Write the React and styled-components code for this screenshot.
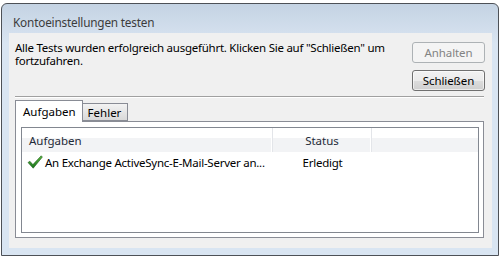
import React from 'react';
import styled, { createGlobalStyle } from 'styled-components';

const GlobalStyle = createGlobalStyle`
  html, body {
    margin: 0;
    background: #ffffff;
  }
  body {
    font-family: "Noto Sans", "Open Sans", sans-serif;
    font-size: 11.5px;
  }
`;

const Window = styled.div`
  box-sizing: border-box;
  margin: 3px 0 0 1px;
  width: 498px;
  height: 253px;
  border: 1px solid #4d5157;
  border-radius: 6px 6px 0 0;
  background: linear-gradient(#c4d3e3 0, #d3dfed 28px, #d9e5f2 40px, #d9e5f2);
  padding: 0 6px 7px 7px;
  display: flex;
  flex-direction: column;
`;

const TitleBar = styled.div`
  height: 29px;
  box-sizing: border-box;
  padding: 10px 0 0 4px;
  line-height: 16px;
  color: #3c3c3c;
  font-size: 11.8px;
  letter-spacing: -0.2px;
`;

const Content = styled.div`
  flex: 1;
  background: #f0f0f0;
  padding: 8px 7px 10px 6px;
  display: flex;
  flex-direction: column;
  min-height: 0;
`;

const TopRow = styled.div`
  display: flex;
  align-items: flex-start;
`;

const Message = styled.div`
  flex: 1;
  line-height: 13px;
  color: #000;
  white-space: nowrap;
  letter-spacing: -0.25px;
`;

const ButtonCol = styled.div`
  display: flex;
  flex-direction: column;
  gap: 7px;
  margin-top: 1px;
`;

const Button = styled.button`
  box-sizing: border-box;
  width: 73px;
  height: 21px;
  padding: 0;
  font: inherit;
  letter-spacing: -0.1px;
  border-radius: 3px;
  border: 1px solid ${p => (p.disabled ? '#adb2b5' : '#707070')};
  color: ${p => (p.disabled ? '#838383' : '#000')};
  background: ${p =>
    p.disabled
      ? '#f4f4f4'
      : 'linear-gradient(#f2f2f2 0, #ebebeb 50%, #dddddd 50%, #cfcfcf 100%)'};
  box-shadow: ${p => (p.disabled ? 'none' : 'inset 0 0 0 1px rgba(255,255,255,0.6)')};
`;

const Separator = styled.div`
  margin: 5px 1px 0 0;
  border-top: 1px solid #a0a0a0;
  border-bottom: 1px solid #ffffff;
`;

const TabStrip = styled.div`
  margin-top: 2px;
  height: 21px;
  display: flex;
  align-items: flex-end;
  position: relative;
  z-index: 1;
`;

const Tab = styled.div`
  box-sizing: border-box;
  height: ${p => (p.active ? '22px' : '18px')};
  margin-bottom: ${p => (p.active ? '-1px' : '0')};
  padding: ${p => (p.active ? '3px 6px 0 7px' : '1px 6px 0 5px')};
  border: 1px solid #898c95;
  border-bottom: ${p => (p.active ? 'none' : '1px solid #898c95')};
  border-left: ${p => (p.active ? '1px solid #898c95' : 'none')};
  background: ${p => (p.active ? '#ffffff' : 'linear-gradient(#f3f3f3, #e3e3e3 60%, #d9d9d9)')};
  line-height: 15px;
  color: #000;
`;

const Panel = styled.div`
  flex: 1;
  margin-right: 1px;
  border: 1px solid #898c95;
  background: #ffffff;
  padding: 5px 4px 4px 5px;
  display: flex;
  min-height: 0;
`;

const ListView = styled.div`
  flex: 1;
  border: 1px solid #828790;
  background: #ffffff;
  display: flex;
  flex-direction: column;
`;

const HeaderRow = styled.div`
  display: flex;
  height: 24px;
  background: linear-gradient(#ffffff 0, #ffffff 42%, #f2f3f5 42%, #f2f3f5 100%);
`;

const HeaderCell = styled.div`
  box-sizing: border-box;
  width: ${p => p.w || 'auto'};
  flex: ${p => (p.w ? 'none' : '1')};
  padding: 5px 0 0 ${p => (p.center ? '0' : '7px')};
  text-align: ${p => (p.center ? 'center' : 'left')};
  border-right: ${p => (p.last ? 'none' : '1px solid #e3e5e9')};
  box-shadow: ${p => (p.last ? 'none' : 'inset -1px 0 0 #ffffff')};
  line-height: 15px;
  color: #1e2a38;
`;

const Row = styled.div`
  display: flex;
  height: 20px;
  align-items: center;
`;

const Cell = styled.div`
  box-sizing: border-box;
  width: ${p => p.w};
  flex: none;
  display: flex;
  align-items: center;
  justify-content: ${p => (p.center ? 'center' : 'flex-start')};
  padding-left: ${p => (p.center ? '0' : '5px')};
  gap: 2px;
  color: #000;
  white-space: nowrap;
  letter-spacing: -0.25px;

  svg {
    flex-shrink: 0;
  }
`;

function Check() {
  return (
    <svg width="16" height="16" viewBox="0 0 16 16">
      <defs>
        <linearGradient id="chk" x1="0" y1="0" x2="0" y2="1">
          <stop offset="0" stopColor="#5fb83f" />
          <stop offset="1" stopColor="#16731a" />
        </linearGradient>
      </defs>
      <path
        d="M1 8.6 L2.8 7.2 L5.9 10.6 L14.2 1.8 L15.4 3 L6.2 14.2 Z"
        fill="url(#chk)"
        stroke="#1d5e1d"
        strokeWidth="0.6"
        strokeLinejoin="round"
      />
    </svg>
  );
}

export default function App() {
  return (
    <>
      <GlobalStyle />
      <Window>
        <TitleBar>Kontoeinstellungen testen</TitleBar>
        <Content>
          <TopRow>
            <Message>
              Alle Tests wurden erfolgreich ausgeführt. Klicken Sie auf "Schließen" um
              <br />
              fortzufahren.
            </Message>
            <ButtonCol>
              <Button disabled>Anhalten</Button>
              <Button>Schließen</Button>
            </ButtonCol>
          </TopRow>
          <Separator />
          <TabStrip>
            <Tab active>Aufgaben</Tab>
            <Tab>Fehler</Tab>
          </TabStrip>
          <Panel>
            <ListView>
              <HeaderRow>
                <HeaderCell w="251px">Aufgaben</HeaderCell>
                <HeaderCell w="99px" center>Status</HeaderCell>
                <HeaderCell last />
              </HeaderRow>
              <Row>
                <Cell w="251px">
                  <Check />
                  An Exchange ActiveSync-E-Mail-Server an...
                </Cell>
                <Cell w="99px" center>Erledigt</Cell>
              </Row>
            </ListView>
          </Panel>
        </Content>
      </Window>
    </>
  );
}
